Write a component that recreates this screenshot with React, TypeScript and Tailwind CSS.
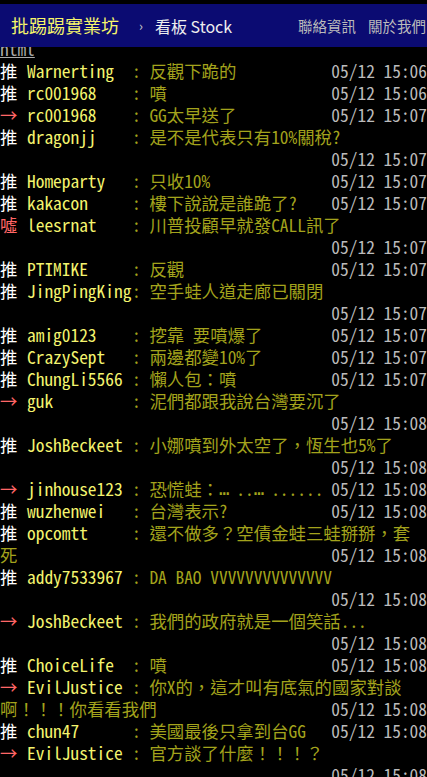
import React from "react"

type Push = {
  tag: "推" | "→" | "噓"
  user: string
  lines: string[]
  time: string
  below?: boolean
}

const pushes: Push[] = [
  { tag: "推", user: "Warnerting", lines: ["反觀下跪的"], time: "05/12 15:06" },
  { tag: "推", user: "rc001968", lines: ["噴"], time: "05/12 15:06" },
  { tag: "→", user: "rc001968", lines: ["GG太早送了"], time: "05/12 15:07" },
  { tag: "推", user: "dragonjj", lines: ["是不是代表只有10%關稅?"], time: "05/12 15:07", below: true },
  { tag: "推", user: "Homeparty", lines: ["只收10%"], time: "05/12 15:07" },
  { tag: "推", user: "kakacon", lines: ["樓下說說是誰跪了?"], time: "05/12 15:07" },
  { tag: "噓", user: "leesrnat", lines: ["川普投顧早就發CALL訊了"], time: "05/12 15:07", below: true },
  { tag: "推", user: "PTIMIKE", lines: ["反觀"], time: "05/12 15:07" },
  { tag: "推", user: "JingPingKing", lines: ["空手蛙人道走廊已關閉"], time: "05/12 15:07", below: true },
  { tag: "推", user: "amig0123", lines: ["挖靠 要噴爆了"], time: "05/12 15:07" },
  { tag: "推", user: "CrazySept", lines: ["兩邊都變10%了"], time: "05/12 15:07" },
  { tag: "推", user: "ChungLi5566", lines: ["懶人包：噴"], time: "05/12 15:07" },
  { tag: "→", user: "guk", lines: ["泥們都跟我說台灣要沉了"], time: "05/12 15:08", below: true },
  { tag: "推", user: "JoshBeckeet", lines: ["小娜噴到外太空了，恆生也5%了"], time: "05/12 15:08", below: true },
  { tag: "→", user: "jinhouse123", lines: ["恐慌蛙：…..…......"], time: "05/12 15:08" },
  { tag: "推", user: "wuzhenwei", lines: ["台灣表示?"], time: "05/12 15:08" },
  { tag: "推", user: "opcomtt", lines: ["還不做多？空債金蛙三蛙掰掰，套", "死"], time: "05/12 15:08" },
  { tag: "推", user: "addy7533967", lines: ["DA BAO VVVVVVVVVVVVVV"], time: "05/12 15:08", below: true },
  { tag: "→", user: "JoshBeckeet", lines: ["我們的政府就是一個笑話..."], time: "05/12 15:08", below: true },
  { tag: "推", user: "ChoiceLife", lines: ["噴"], time: "05/12 15:08" },
  { tag: "→", user: "EvilJustice", lines: ["你X的，這才叫有底氣的國家對談", "啊！！！你看看我們"], time: "05/12 15:08" },
  { tag: "推", user: "chun47", lines: ["美國最後只拿到台GG"], time: "05/12 15:08" },
  { tag: "→", user: "EvilJustice", lines: ["官方談了什麼！！！？"], time: "05/12 15:08", below: true },
]

// ellipsis sits on the baseline in the terminal font, not centred like the CJK one
const renderText = (s: string) =>
  s.split("…").map((part, i) => (
    <React.Fragment key={i}>
      {i > 0 && (
        <span className="inline-block h-[22px] w-[17.4px] align-top leading-[22px] font-['DejaVu_Sans_Mono',monospace]">…</span>
      )}
      {part}
    </React.Fragment>
  ))

const Time = ({ t }: { t: string }) => (
  <span className="ml-auto shrink-0 whitespace-pre text-[#bbbbbb]">{t}</span>
)

const PushRow = ({ p }: { p: Push }) => {
  const [first, ...rest] = p.lines
  const single = rest.length === 0
  return (
    <div>
      {/* first line: tag, userid, content */}
      <div className="flex h-[22px] whitespace-pre">
        <span className={`w-[27px] shrink-0 ${p.tag === "推" ? "text-white" : "text-[#ff6666]"}`}>{p.tag}</span>
        <span className="w-[105px] shrink-0 text-[#f4f46e]">{p.user}</span>
        <span className="text-[#a3a31c]">{renderText(`: ${first}`)}</span>
        {single && !p.below && <Time t={p.time} />}
      </div>
      {/* wrapped lines */}
      {rest.map((line, i) => (
        <div key={i} className="flex h-[22px] whitespace-pre">
          <span className="text-[#a3a31c]">{renderText(line)}</span>
          {i === rest.length - 1 && !p.below && <Time t={p.time} />}
        </div>
      ))}
      {p.below && (
        <div className="flex h-[22px]">
          <Time t={p.time} />
        </div>
      )}
    </div>
  )
}

const App = () => {
  return (
    <div className="relative h-[777px] w-full overflow-hidden bg-black">
      {/* TOP BAR */}
      <div className="absolute left-0 right-0 top-[4px] z-10 flex h-[43px] items-center bg-[#0b0b72] pl-[11px] font-['Noto_Sans_CJK_TC',sans-serif]">
        <span className="text-[18px] text-[#f6f66a]">批踢踢實業坊</span>
        <span className="ml-[20px] text-[13px] text-[#cccccc]">›</span>
        <span className="ml-[12px] text-[16px] text-[#eeeeee]">看板 Stock</span>
        <div className="ml-auto flex gap-[12px] pr-[1px] text-[14.5px] text-[#bbbbbb]">
          <span>聯絡資訊</span>
          <span>關於我們</span>
        </div>
      </div>
      {/* CONTENT */}
      <div className="pt-[38px] text-[17.4px] leading-[22px] font-['Noto_Sans_Mono_CJK_TC','Noto_Sans_CJK_TC',monospace]">
        <div className="h-[22px] text-[#aaaaaa] underline">html</div>
        {pushes.map((p, i) => (
          <PushRow key={i} p={p} />
        ))}
      </div>
    </div>
  )
}

export default App
